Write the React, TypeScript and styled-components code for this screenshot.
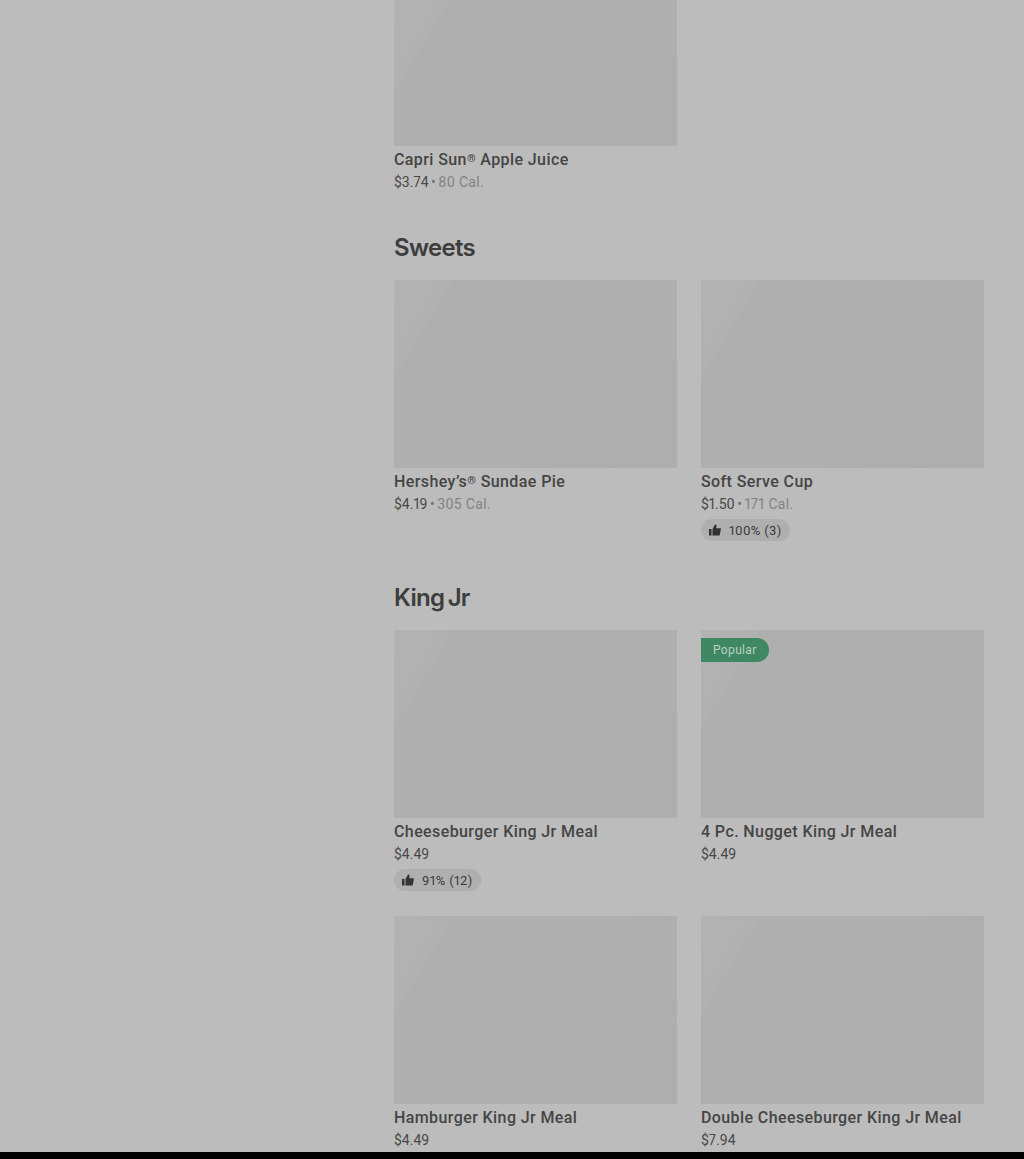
import styled, { createGlobalStyle } from "styled-components"

const GlobalStyle = createGlobalStyle`
	html, body {
		margin: 0;
		background: #000;
	}
	body {
		font-family: "Roboto", "Liberation Sans", sans-serif;
	}
`

const Page = styled.div`
	height: 1152px;
	overflow: hidden;
	background: #bcbcbc;
	padding: 0 40px 0 394px;
	box-sizing: border-box;
`

const Section = styled.section`
	margin-bottom: 22px;
`

const Heading = styled.h2`
	margin: 0;
	padding-top: 18px;
	height: 66px;
	box-sizing: border-box;
	font-family: "Inter", sans-serif;
	font-size: 24px;
	line-height: 32px;
	font-weight: 600;
	letter-spacing: -0.7px;
	word-spacing: -2px;
	color: #3d3d3d;
`

const Grid = styled.div`
	display: grid;
	grid-template-columns: 283px 283px;
	column-gap: 24px;
	row-gap: 24px;
`

const Card = styled.div`
	display: flex;
	flex-direction: column;
	align-items: flex-start;
`

const Thumb = styled.div<{ $height: number }>`
	position: relative;
	width: 100%;
	height: ${(p) => p.$height}px;
	background: linear-gradient(121deg, #b2b2b2 0%, #b1b1b1 15%, #afafaf 15%, #aeaeae 100%);
`

const Badge = styled.span`
	position: absolute;
	top: 8px;
	left: 0;
	height: 24px;
	padding: 0 12px;
	display: flex;
	align-items: center;
	background: #3f8863;
	border-radius: 0 12px 12px 0;
	font-size: 12px;
	letter-spacing: 0.35px;
	color: #b9d0c4;
`

const Title = styled.div`
	margin-top: 4px;
	font-size: 16px;
	line-height: 20px;
	font-weight: 500;
	letter-spacing: 0.4px;
	color: #454545;
`

const Reg = styled.span`
	font-size: 11px;
	vertical-align: 3px;
	line-height: 0;
`

const Meta = styled.div`
	margin-top: 2px;
	font-size: 14px;
	line-height: 20px;
	font-variant-numeric: proportional-nums;
	color: #484848;
`

const Dot = styled.span`
	margin: 0 2.5px;
	color: #6f6f6f;
`

const Cal = styled.span`
	letter-spacing: 0.3px;
	color: #828282;
`

const Rating = styled.div`
	margin: 5px 0 1px;
	height: 22px;
	padding: 0 8px;
	display: flex;
	align-items: center;
	gap: 8px;
	background: #afafaf;
	border-radius: 11px;
	font-size: 13px;
	font-variant-numeric: proportional-nums;
	letter-spacing: 0.35px;
	color: #3c3c3c;
`

const ThumbsUp = () => (
	<svg width="12" height="12" viewBox="0 0 12 12" fill="#333333">
		<path d="M0 5h2.5v6.5H0z" />
		<path d="M3.5 5 6 0.5c1 0 1.6.7 1.6 1.6L7.2 4.2H12l-1.4 7.3H3.5z" />
	</svg>
)

type Item = {
	name: string
	reg?: string
	price: string
	cal?: string
	rating?: string
	popular?: boolean
	height?: number
}

const ItemCard = ({ name, reg, price, cal, rating, popular, height = 188 }: Item) => (
	<Card>
		<Thumb $height={height}>{popular && <Badge>Popular</Badge>}</Thumb>
		<Title>
			{name}
			{reg && (
				<>
					<Reg>®</Reg> {reg}
				</>
			)}
		</Title>
		<Meta>
			{price}
			{cal && (
				<>
					<Dot>•</Dot>
					<Cal>{cal}</Cal>
				</>
			)}
		</Meta>
		{rating && (
			<Rating>
				<ThumbsUp />
				{rating}
			</Rating>
		)}
	</Card>
)

export default function App() {
	return (
		<>
			<GlobalStyle />
			<Page>
				<Section>
					<Grid>
						<ItemCard name="Capri Sun" reg="Apple Juice" price="$3.74" cal="80 Cal." height={146} />
					</Grid>
				</Section>
				<Section>
					<Heading>Sweets</Heading>
					<Grid>
						<ItemCard name="Hershey’s" reg="Sundae Pie" price="$4.19" cal="305 Cal." />
						<ItemCard name="Soft Serve Cup" price="$1.50" cal="171 Cal." rating="100% (3)" />
					</Grid>
				</Section>
				<Section>
					<Heading>King Jr</Heading>
					<Grid>
						<ItemCard name="Cheeseburger King Jr Meal" price="$4.49" rating="91% (12)" />
						<ItemCard name="4 Pc. Nugget King Jr Meal" price="$4.49" popular />
						<ItemCard name="Hamburger King Jr Meal" price="$4.49" />
						<ItemCard name="Double Cheeseburger King Jr Meal" price="$7.94" />
					</Grid>
				</Section>
			</Page>
		</>
	)
}
